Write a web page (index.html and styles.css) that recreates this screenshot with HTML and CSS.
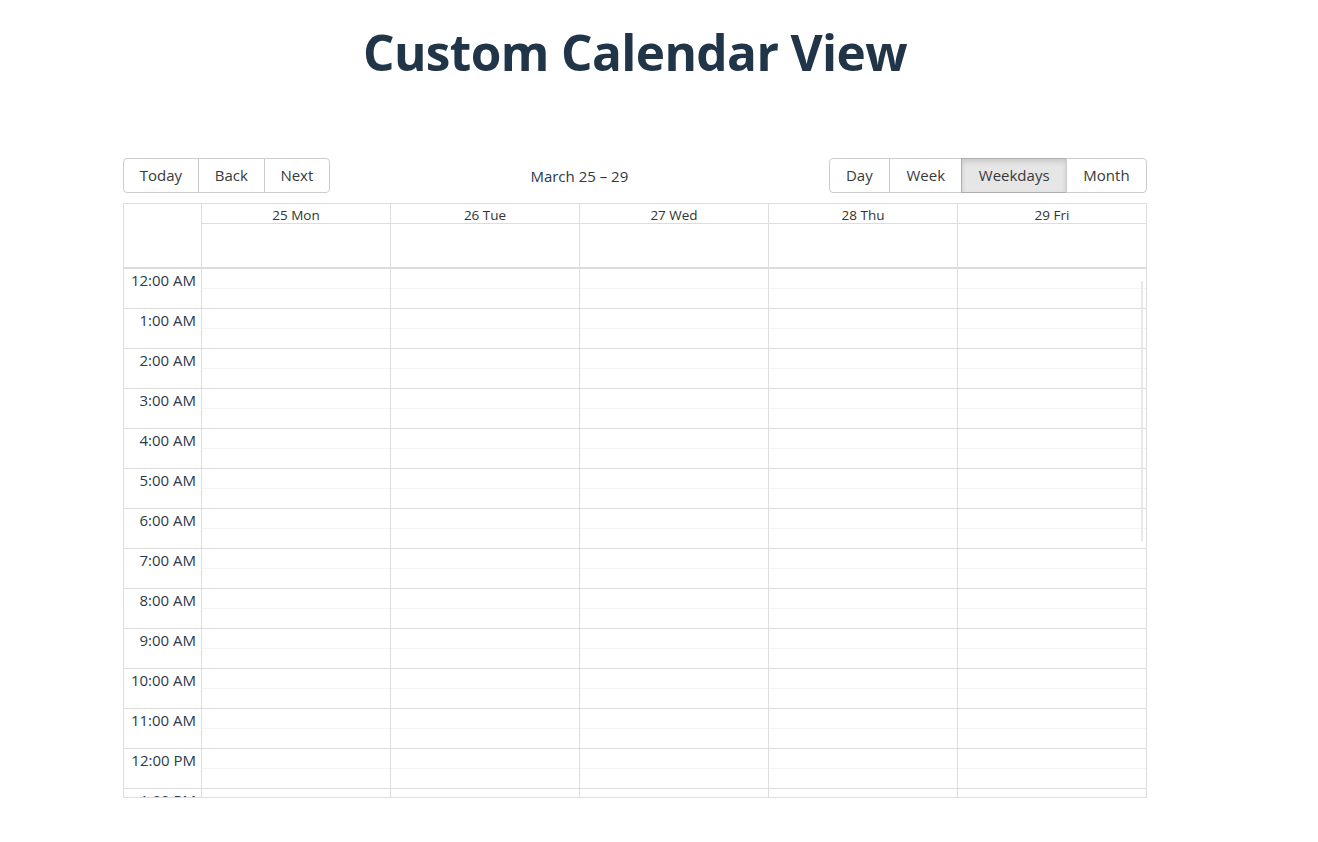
FILE: index.html
```html
<!DOCTYPE html>
<html lang="en">
<head>
<meta charset="utf-8">
<title>Custom Calendar View</title>
<link rel="stylesheet" href="styles.css">
</head>
<body>
<div class="app">
  <h1 class="title">Custom Calendar View</h1>
  <div class="toolbar">
    <div class="btn-group nav-group">
      <button class="btn">Today</button>
      <button class="btn">Back</button>
      <button class="btn">Next</button>
    </div>
    <div class="toolbar-label">March 25 – 29</div>
    <div class="btn-group view-group">
      <button class="btn">Day</button>
      <button class="btn">Week</button>
      <button class="btn active">Weekdays</button>
      <button class="btn">Month</button>
    </div>
  </div>
  <div class="calendar">
    <div class="time-header">
      <div class="header-gutter"></div>
      <div class="header-day"><div class="day-label">25 Mon</div><div class="allday"></div></div>
      <div class="header-day"><div class="day-label">26 Tue</div><div class="allday"></div></div>
      <div class="header-day"><div class="day-label">27 Wed</div><div class="allday"></div></div>
      <div class="header-day"><div class="day-label">28 Thu</div><div class="allday"></div></div>
      <div class="header-day"><div class="day-label">29 Fri</div><div class="allday"></div></div>
    </div>
    <div class="time-content">
      <div class="gutter">
        <div class="ggroup"><span>12:00 AM</span></div>
        <div class="ggroup"><span>1:00 AM</span></div>
        <div class="ggroup"><span>2:00 AM</span></div>
        <div class="ggroup"><span>3:00 AM</span></div>
        <div class="ggroup"><span>4:00 AM</span></div>
        <div class="ggroup"><span>5:00 AM</span></div>
        <div class="ggroup"><span>6:00 AM</span></div>
        <div class="ggroup"><span>7:00 AM</span></div>
        <div class="ggroup"><span>8:00 AM</span></div>
        <div class="ggroup"><span>9:00 AM</span></div>
        <div class="ggroup"><span>10:00 AM</span></div>
        <div class="ggroup"><span>11:00 AM</span></div>
        <div class="ggroup"><span>12:00 PM</span></div>
        <div class="ggroup"><span>1:00 PM</span></div>
      </div>
      <div class="day-col"></div>
      <div class="day-col"></div>
      <div class="day-col"></div>
      <div class="day-col"></div>
      <div class="day-col"></div>
      <div class="scroll-thumb"></div>
    </div>
  </div>
</div>
</body>
</html>
```
FILE: styles.css
```css
* { box-sizing: border-box; }
html, body { margin: 0; padding: 0; background: #fff; }
body {
  font-family: "Open Sans", "Noto Sans", "Liberation Sans", sans-serif;
  color: #373a3c;
}
.app {
  width: 1024px;
  margin-left: 123px;
  padding-top: 20px;
}
.title {
  margin: 0 0 74px;
  text-align: center;
  font-size: 49.5px;
  line-height: 64px;
  font-weight: 700;
  color: #213548;
  letter-spacing: -0.6px;
}
.toolbar {
  display: flex;
  align-items: center;
  margin-bottom: 10px;
}
.btn-group { display: inline-flex; }
.btn {
  font-family: inherit;
  font-size: 15px;
  color: #373a3c;
  background: #fff;
  border: 1px solid #ccc;
  height: 35px;
  padding: 0 16px;
  margin: 0 0 0 -1px;
  border-radius: 0;
  line-height: 33px;
}
.nav-group .btn { padding: 0 15.8px; }
.view-group .btn { padding: 0 16.4px; }
.btn:first-child { margin-left: 0; border-radius: 4px 0 0 4px; }
.btn:last-child { border-radius: 0 4px 4px 0; }
.btn.active {
  background: #e6e6e6;
  border-color: #adadad;
  box-shadow: inset 0 3px 5px rgba(0,0,0,0.125);
}
.toolbar-label {
  flex: 1;
  text-align: center;
  font-size: 15px;
  padding: 0 10px;
  color: #2b3a4a;
}
.calendar {
  height: 595px;
  border: 1px solid #ddd;
  display: flex;
  flex-direction: column;
  overflow: hidden;
}
.time-header {
  display: flex;
  flex: none;
}
.header-gutter {
  width: 77px;
  flex: none;
  height: 63px;
}
.header-day {
  flex: 1;
  border-left: 1px solid #ddd;
  display: flex;
  flex-direction: column;
}
.day-label {
  height: 20px;
  border-bottom: 1px solid #ddd;
  text-align: center;
  font-size: 13.5px;
  line-height: 23px;
  color: #333;
}
.allday { height: 43px; }
.time-content {
  position: relative;
  flex: 1;
  display: flex;
  border-top: 2px solid #ddd;
  overflow: hidden;
}
.gutter {
  width: 77px;
  flex: none;
}
.ggroup {
  height: 40px;
  border-bottom: 1px solid #ddd;
  text-align: right;
  padding-right: 5px;
  font-size: 15px;
  line-height: 22px;
  color: #2b3a4a;
}
.day-col {
  flex: 1;
  border-left: 1px solid #ddd;
  background-image:
    linear-gradient(to bottom, transparent 19px, #f4f4f4 19px, #f4f4f4 20px, transparent 20px, transparent 39px, #ddd 39px, #ddd 40px);
  background-size: 100% 40px;
}
.scroll-thumb {
  position: absolute;
  right: 3px;
  top: 12px;
  width: 2px;
  height: 260px;
  background: #e8e8e8;
}
```
